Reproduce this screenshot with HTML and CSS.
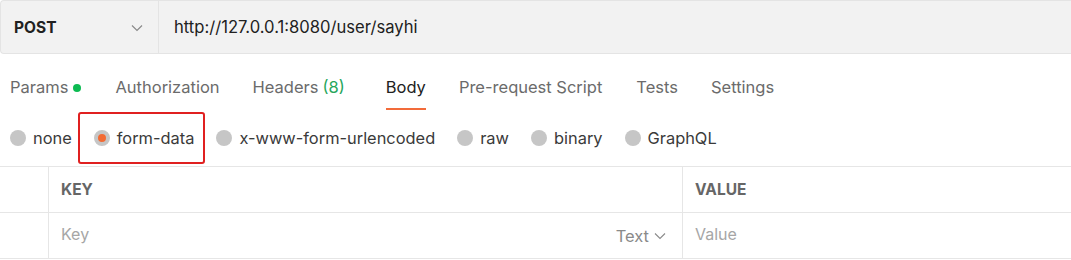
FILE: index.html
```html
<!DOCTYPE html>
<html>
<head>
<meta charset="utf-8">
<link rel="stylesheet" href="styles.css">
</head>
<body>
<div class="urlbar">
  <div class="method">
    <span class="method-name">POST</span>
    <svg class="chev" width="12" height="8" viewBox="0 0 12 8"><path d="M1 1.5 L6 6.5 L11 1.5" fill="none" stroke="#8a8a8a" stroke-width="1.2"/></svg>
  </div>
  <div class="url">http://127.0.0.1:8080/user/sayhi</div>
</div>
<div class="tabs">
  <div class="tab params">Params<span class="dot"></span></div>
  <div class="tab">Authorization</div>
  <div class="tab headers">Headers <span class="count">(8)</span></div>
  <div class="tab active">Body</div>
  <div class="tab prereq">Pre-request Script</div>
  <div class="tab">Tests</div>
  <div class="tab">Settings</div>
</div>
<div class="radios">
  <div class="radio"><span class="circle"></span>none</div>
  <div class="radio selected"><span class="circle"></span>form-data<span class="highlight"></span></div>
  <div class="radio"><span class="circle"></span>x-www-form-urlencoded</div>
  <div class="radio"><span class="circle"></span>raw</div>
  <div class="radio"><span class="circle"></span>binary</div>
  <div class="radio"><span class="circle"></span>GraphQL</div>
</div>
<div class="table">
  <div class="row head">
    <div class="cell check"></div>
    <div class="cell key">KEY</div>
    <div class="cell value">VALUE</div>
  </div>
  <div class="row body-row">
    <div class="cell check"></div>
    <div class="cell key placeholder"><span>Key</span><span class="type">Text<svg width="12" height="8" viewBox="0 0 12 8"><path d="M1 1.5 L6 6.5 L11 1.5" fill="none" stroke="#8a8a8a" stroke-width="1.1"/></svg></span></div>
    <div class="cell value placeholder">Value</div>
  </div>
</div>
</body>
</html>
```
FILE: styles.css
```css
* { box-sizing: border-box; }
body {
  margin: 0;
  font-family: Inter, "Noto Sans", sans-serif;
  background: #fff;
  width: 1071px;
  height: 260px;
  overflow: hidden;
  color: #212121;
}
.urlbar {
  display: flex;
  height: 54px;
  background: #f2f2f2;
  border-top: 1px solid #e4e4e4;
  border-bottom: 1px solid #e4e4e4;
  border-left: 1px solid #e4e4e4;
  border-radius: 4px 0 0 4px;
}
.method {
  width: 158px;
  display: flex;
  align-items: center;
  justify-content: space-between;
  padding: 0 15px 0 13px;
  border-right: 1px solid #e4e4e4;
}
.method-name {
  font-weight: 700;
  font-size: 15.5px;
  color: #212121;
}
.chev { margin-top: 1px; }
.url {
  display: flex;
  align-items: center;
  padding-left: 15px;
  font-size: 16.6px;
  color: #212121;
}
.tabs {
  display: flex;
  height: 56px;
  padding-left: 10px;
}
.tab {
  position: relative;
  display: flex;
  align-items: center;
  height: 100%;
  padding-top: 10px;
  margin-right: 33px;
  font-size: 16.5px;
  color: #6b6b6b;
}
.tab.params { margin-right: 34px; }
.tab.headers { margin-right: 41px; }
.tab.prereq { margin-right: 34px; }
.tab.active { color: #212121; }
.tab.active::after {
  content: "";
  position: absolute;
  left: 0;
  right: 0;
  bottom: 0;
  height: 2px;
  background: #f26b3a;
}
.dot {
  display: inline-block;
  width: 8px;
  height: 8px;
  border-radius: 50%;
  background: #0cbb52;
  margin-left: 5px;
  margin-top: 1px;
}
.count { color: #26a65b; margin-left: 4px; }
.radios {
  display: flex;
  align-items: center;
  height: 56px;
  padding-left: 10px;
}
.radio {
  position: relative;
  display: flex;
  align-items: center;
  font-size: 16.4px;
  color: #3a3a3a;
  margin-right: 22px;
  padding-bottom: 1px;
}
.circle {
  width: 16px;
  height: 16px;
  border-radius: 50%;
  background: #c6c6c6;
  margin-right: 7px;
}
.selected .circle {
  background: #f36b34;
  border: 4px solid #c6c6c6;
}
.highlight {
  position: absolute;
  left: -16px;
  top: -16px;
  width: 127px;
  height: 52px;
  border: 2px solid #e02020;
  border-radius: 3px;
}
.table {
  border-top: 1px solid #e6e6e6;
}
.row {
  display: flex;
  height: 46px;
  border-bottom: 1px solid #e6e6e6;
}
.cell {
  display: flex;
  align-items: center;
  font-size: 15.5px;
}
.check {
  width: 49px;
  border-right: 1px solid #e6e6e6;
}
.key {
  width: 634px;
  padding-left: 12px;
  padding-right: 16px;
  border-right: 1px solid #e6e6e6;
  justify-content: space-between;
}
.value { padding-left: 12px; }
.head .cell {
  font-weight: 700;
  color: #666;
  font-size: 15.5px;
  padding-bottom: 1px;
}
.body-row .cell { padding-bottom: 3px; }
.placeholder { color: #a6a6a6; font-size: 16px; }
.type {
  display: flex;
  align-items: center;
  gap: 5px;
  color: #8a8a8a;
  font-size: 16.5px;
  padding-top: 3px;
}
```
